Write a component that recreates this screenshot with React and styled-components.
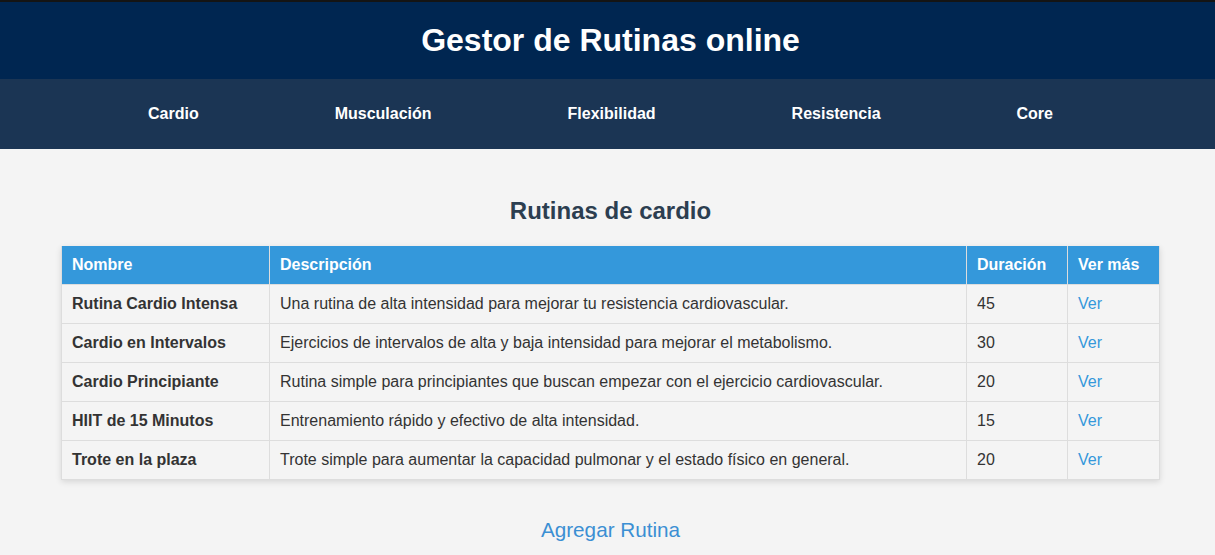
import styled, { createGlobalStyle } from "styled-components";

const GlobalStyle = createGlobalStyle`
  body {
    margin: 0;
    background: #f4f4f4;
    font-family: "Liberation Sans", Arial, sans-serif;
    color: #333;
  }
`;

const rutinas = [
  { nombre: "Rutina Cardio Intensa", desc: "Una rutina de alta intensidad para mejorar tu resistencia cardiovascular.", dur: 45 },
  { nombre: "Cardio en Intervalos", desc: "Ejercicios de intervalos de alta y baja intensidad para mejorar el metabolismo.", dur: 30 },
  { nombre: "Cardio Principiante", desc: "Rutina simple para principiantes que buscan empezar con el ejercicio cardiovascular.", dur: 20 },
  { nombre: "HIIT de 15 Minutos", desc: "Entrenamiento rápido y efectivo de alta intensidad.", dur: 15 },
  { nombre: "Trote en la plaza", desc: "Trote simple para aumentar la capacidad pulmonar y el estado físico en general.", dur: 20 },
];

const categorias = ["Cardio", "Musculación", "Flexibilidad", "Resistencia", "Core"];

function App() {
  return (
    <>
      <GlobalStyle />
      <Header>
        <Title>Gestor de Rutinas online</Title>
      </Header>
      <Nav>
        {categorias.map((c) => (
          <NavLink key={c} href="#">{c}</NavLink>
        ))}
      </Nav>
      <Main>
        <Heading>Rutinas de cardio</Heading>
        <Table>
          <thead>
            <tr>
              <Th $w={208}>Nombre</Th>
              <Th $w={697}>Descripción</Th>
              <Th $w={101}>Duración</Th>
              <Th $w={92}>Ver más</Th>
            </tr>
          </thead>
          <tbody>
            {rutinas.map((r) => (
              <tr key={r.nombre}>
                <Td $bold>{r.nombre}</Td>
                <Td>{r.desc}</Td>
                <Td>{r.dur}</Td>
                <Td><Link href="#">Ver</Link></Td>
              </tr>
            ))}
          </tbody>
        </Table>
        <AddLink href="#">Agregar Rutina</AddLink>
      </Main>
    </>
  );
}

const Header = styled.header`
  background: #002651;
  border-top: 2px solid #141414;
  height: 77px;
  display: flex;
  align-items: center;
  justify-content: center;
`;

const Title = styled.h1`
  margin: 0 0 0 6px;
  color: #fff;
  font-size: 32px;
  font-weight: bold;
`;

const Nav = styled.nav`
  background: #1b3554;
  height: 70px;
  display: flex;
  align-items: center;
  justify-content: center;
  gap: 136px;
  padding-right: 14px;
`;

const NavLink = styled.a`
  color: #fff;
  text-decoration: none;
  font-weight: bold;
  font-size: 16px;
`;

const Main = styled.main`
  display: flex;
  flex-direction: column;
  align-items: center;
  padding-top: 48px;
`;

const Heading = styled.h2`
  margin: 0 0 21px 6px;
  font-size: 24px;
  color: #2c3e50;
`;

const Table = styled.table`
  width: 1099px;
  table-layout: fixed;
  border-collapse: collapse;
  box-shadow: 0 2px 6px rgba(0, 0, 0, 0.12);
  margin-left: 6px;
`;

const Th = styled.th`
  box-sizing: border-box;
  width: ${(p) => p.$w}px;
  background: #3498db;
  color: #fff;
  text-align: left;
  font-size: 16px;
  line-height: 18px;
  padding: 10px 10px;
  border: 1px solid #ddd;
  border-top: none;
`;

const Td = styled.td`
  padding: 10px 10px;
  font-size: 16px;
  line-height: 18px;
  border: 1px solid #ddd;
  font-weight: ${(p) => (p.$bold ? "bold" : "normal")};
  color: #333;
`;

const Link = styled.a`
  color: #3498db;
  text-decoration: none;
`;

const AddLink = styled.a`
  margin: 38px 0 0 6px;
  font-size: 20.7px;
  color: #3b8fd3;
  text-decoration: none;
`;

export default App;
